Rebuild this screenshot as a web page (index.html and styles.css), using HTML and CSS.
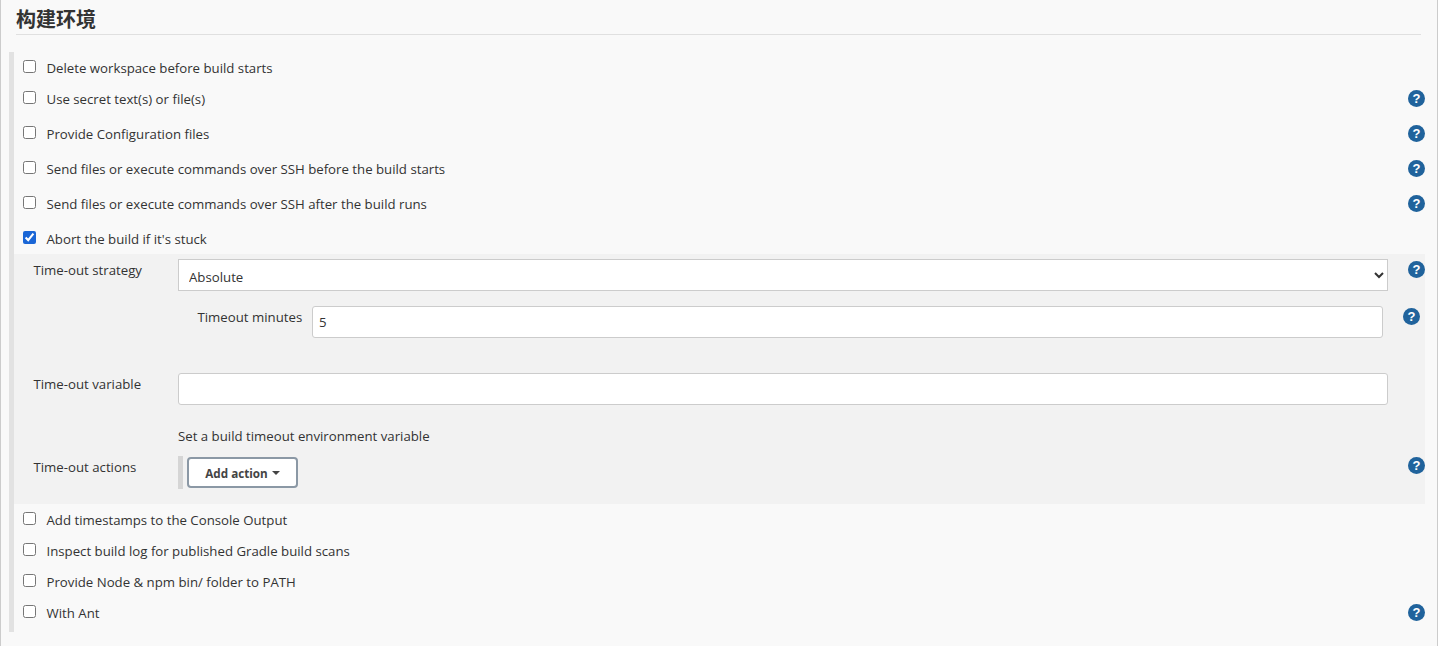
FILE: index.html
```html
<!DOCTYPE html>
<html lang="zh">
<head>
<meta charset="utf-8">
<title>构建环境</title>
<link rel="stylesheet" href="styles.css">
</head>
<body>
<main class="page">
  <h2 class="title">构建环境</h2>
  <section class="group">
    <div class="row r1"><label class="check"><input type="checkbox"><span>Delete workspace before build starts</span></label></div>
    <div class="row r2"><label class="check"><input type="checkbox"><span>Use secret text(s) or file(s)</span></label><button class="help" type="button">?</button></div>
    <div class="row"><label class="check"><input type="checkbox"><span>Provide Configuration files</span></label><button class="help" type="button">?</button></div>
    <div class="row"><label class="check"><input type="checkbox"><span>Send files or execute commands over SSH before the build starts</span></label><button class="help" type="button">?</button></div>
    <div class="row"><label class="check"><input type="checkbox"><span>Send files or execute commands over SSH after the build runs</span></label><button class="help" type="button">?</button></div>
    <div class="row"><label class="check"><input type="checkbox" checked><span>Abort the build if it's stuck</span></label></div>
    <div class="nested">
      <div class="field strategy">
        <span class="field-label">Time-out strategy</span>
        <select class="control select"><option>Absolute</option></select>
        <button class="help" type="button">?</button>
      </div>
      <div class="sub-field">
        <span class="sub-label">Timeout minutes</span>
        <input class="control text sub-input" type="text" value="5">
        <button class="help" type="button">?</button>
      </div>
      <div class="field variable">
        <span class="field-label">Time-out variable</span>
        <input class="control text" type="text">
      </div>
      <p class="desc">Set a build timeout environment variable</p>
      <div class="field actions">
        <span class="field-label">Time-out actions</span>
        <div class="action-wrap"><button class="add" type="button">Add action<i class="caret"></i></button></div>
        <button class="help" type="button">?</button>
      </div>
    </div>
    <div class="row low"><label class="check"><input type="checkbox"><span>Add timestamps to the Console Output</span></label></div>
    <div class="row low"><label class="check"><input type="checkbox"><span>Inspect build log for published Gradle build scans</span></label></div>
    <div class="row low"><label class="check"><input type="checkbox"><span>Provide Node &amp; npm bin/ folder to PATH</span></label></div>
    <div class="row low"><label class="check"><input type="checkbox"><span>With Ant</span></label><button class="help" type="button">?</button></div>
  </section>
</main>
</body>
</html>
```
FILE: styles.css
```css
* { box-sizing: border-box; }
html, body { margin: 0; padding: 0; background: #fff; }
body {
  font-family: "Open Sans", "Noto Sans", "Noto Sans CJK SC", sans-serif;
  font-size: 13.23px;
  color: #333;
  overflow: hidden;
}
.page {
  width: 1438px;
  height: 646px;
  background: #f9f9f9;
  border-left: 1px solid #ccc;
  border-right: 1px solid #ccc;
  padding: 0 0 0 8px;
}
.title {
  margin: 0 16px 0 7px;
  height: 35px;
  padding-top: 7px;
  border-bottom: 1px solid #e0e0e0;
  font: bold 20px/24px "Noto Sans CJK SC", sans-serif;
  color: #333;
}
.group {
  margin-top: 17px;
  width: 1416px;
  border-left: 5px solid #e2e2e2;
  height: 580px;
}
.row {
  height: 35px;
  display: flex;
  align-items: center;
  padding: 0 0 0 9px;
  justify-content: space-between;
}
.r1 { height: 30px; }
.r2 { height: 32px; margin-bottom: 1.5px; }
.low { height: 31px; }
.check { display: flex; align-items: center; }
.check input {
  margin: 0 10.5px 0 0;
  width: 13px;
  height: 13px;
  position: relative;
  top: -1px;
  accent-color: #1a66d6;
}
.check span { position: relative; top: 1px; }
.low .check span { top: 0; }
.help {
  width: 17px;
  height: 17px;
  border: 0;
  padding: 0;
  border-radius: 50%;
  background: #20639c;
  color: #fff;
  font: bold 13px/17px "Liberation Sans", sans-serif;
  text-align: center;
  flex: none;
}
.nested {
  height: 250px;
  background: #f2f2f2;
  padding: 5px 0 0 19px;
  margin-top: -1.5px;
}
.field { display: flex; align-items: flex-start; }
.field .help, .sub-field .help { margin-top: 2px; margin-left: auto; }
.field-label { width: 145px; flex: none; padding: 2px 0 0 0.5px; }
.control {
  font: inherit;
  color: #333;
  background: #fff;
  border: 1px solid #ccc;
}
.select { flex: none; width: 1210px; height: 32px; border-radius: 0; padding: 4px 0 0 6px; }
.text { width: 1210px; height: 32px; border-radius: 3px; padding: 0 6px; flex: none; outline: 0; }
.sub-field { display: flex; align-items: flex-start; margin-top: 15px; padding-left: 164px; }
.sub-label { width: 115px; flex: none; padding: 2px 0 0 0.5px; }
.sub-input { width: 1071px; }
.sub-field .help { margin-right: 5px; }
.variable { margin-top: 35px; height: 32px; }
.desc { margin: 23px 0 0 145px; line-height: 17px; }
.actions { margin-top: 11px; }
.actions .field-label { padding-top: 2px; }
.actions .help { margin-top: 1px; }
.action-wrap { width: 120px; flex: none; border-left: 5px solid #d5d5d5; height: 33px; padding: 1px 0 0 4px; }
.add {
  width: 111px;
  height: 31px;
  background: #fff;
  border: 2px solid #8b98a5;
  border-radius: 4px;
  font: 700 11.7px "Open Sans", sans-serif;
  color: #444;
  padding: 1px 0 0;
}
.caret {
  display: inline-block;
  margin-left: 4px;
  border: 4.5px solid transparent;
  border-top: 4.5px solid #444;
  border-bottom: 0;
  position: relative;
  top: -3px;
}
```
